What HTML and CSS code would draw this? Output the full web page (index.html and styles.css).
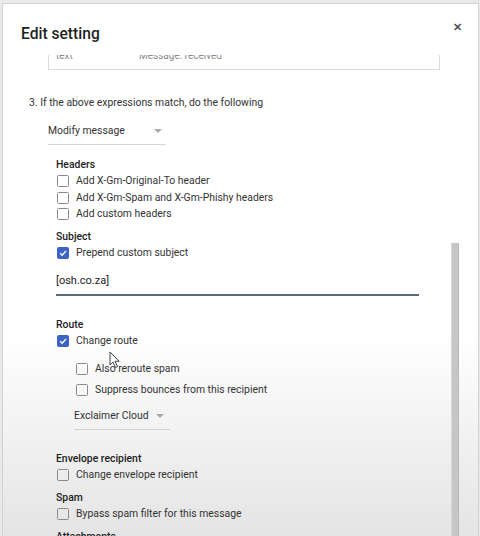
FILE: index.html
```html
<!DOCTYPE html>
<html>
<head>
<meta charset="utf-8">
<link rel="stylesheet" href="styles.css">
</head>
<body>
<div class="dialog">
  <div class="header">
    <h1 class="title">Edit setting</h1>
    <span class="close">&#x2715;</span>
  </div>
  <div class="viewport">
    <div class="content">
      <div class="table">
        <div class="table-row"><span class="col1">text</span><span class="col2">Message: received</span></div>
      </div>
      <div class="step">3. If the above expressions match, do the following</div>
      <div class="select select-main"><span>Modify message</span><span class="caret"></span></div>

      <div class="group g-headers">
        <div class="label">Headers</div>
        <div class="row"><span class="cb"></span>Add X-Gm-Original-To header</div>
        <div class="row"><span class="cb"></span>Add X-Gm-Spam and X-Gm-Phishy headers</div>
        <div class="row"><span class="cb"></span>Add custom headers</div>
      </div>

      <div class="group g-subject">
        <div class="label">Subject</div>
        <div class="row"><span class="cb checked"><svg viewBox="0 0 12 12"><path d="M2.6 6.2 L5 8.6 L9.6 3.6" /></svg></span>Prepend custom subject</div>
        <div class="input">[osh.co.za]</div>
      </div>

      <div class="group g-route">
        <div class="label">Route</div>
        <div class="row"><span class="cb checked"><svg viewBox="0 0 12 12"><path d="M2.6 6.2 L5 8.6 L9.6 3.6" /></svg></span>Change route</div>
        <div class="nested">
          <div class="row nrow first"><span class="cb"></span>Also reroute spam</div>
          <div class="row nrow"><span class="cb"></span>Suppress bounces from this recipient</div>
          <div class="select select-route"><span>Exclaimer Cloud</span><span class="caret"></span></div>
        </div>
      </div>

      <div class="group g-env">
        <div class="label">Envelope recipient</div>
        <div class="row"><span class="cb"></span>Change envelope recipient</div>
      </div>

      <div class="group g-spam">
        <div class="label">Spam</div>
        <div class="row"><span class="cb"></span>Bypass spam filter for this message</div>
      </div>

      <div class="group g-att">
        <div class="label">Attachments</div>
      </div>
    </div>
    <div class="scrollbar"></div>
    <svg class="cursor" viewBox="0 0 12 18"><path d="M1 1 L1 14 L4 11 L6.5 16.5 L8.5 15.6 L6 10.3 L10.2 10.3 Z" fill="#fff" stroke="#444" stroke-width="1"/></svg>
  </div>
</div>
</body>
</html>
```

FILE: styles.css
```css
* { box-sizing: border-box; }
html, body { margin: 0; padding: 0; }
body {
  width: 480px;
  height: 536px;
  overflow: hidden;
  background: #e9e9e9;
  font-family: Roboto, "Liberation Sans", Arial, sans-serif;
  color: #2b2b2b;
}
.dialog {
  margin: 3px 0 0 2px;
  width: 477px;
  height: 533px;
  border: 1px solid #d2d2d2;
  border-bottom: none;
  background: linear-gradient(to bottom, #ffffff 0px, #ffffff 330px, #f3f3f3 420px, #e4e4e4 533px);
  display: flex;
  flex-direction: column;
  overflow: hidden;
}
.header {
  height: 51px;
  flex: none;
  display: flex;
  justify-content: space-between;
  align-items: flex-start;
  padding: 0 16px 0 18px;
  background: #fff;
}
.title {
  margin: 21px 0 0 0;
  font-size: 15.6px;
  font-weight: 500;
  color: #1f1f1f;
  line-height: 18px;
}
.close {
  margin-top: 17px;
  font-size: 11px;
  color: #555;
  font-weight: 700;
  line-height: 14px;
}
.viewport {
  flex: 1;
  position: relative;
  overflow: hidden;
}
.content {
  margin-top: -23px;
  padding-left: 26px;
  font-size: 10.4px;
  line-height: 16px;
}
.table {
  margin-left: 19px;
  width: 392px;
  border: 1px solid #dcdcdc;
  border-top: none;
  padding: 16px 7px 5px;
  color: #888;
}
.table-row { display: flex; font-size: 10px; }
.col1 { width: 83px; }
.step {
  margin-top: 25px;
  color: #333;
}
.select {
  display: flex;
  align-items: center;
  justify-content: space-between;
  border-bottom: 1px solid #d4d4d4;
  color: #333;
  padding-bottom: 5px;
}
.select-main {
  margin: 12px 0 0 19px;
  width: 118px;
  padding-right: 4px;
}
.caret {
  width: 0;
  height: 0;
  border-left: 4px solid transparent;
  border-right: 4px solid transparent;
  border-top: 4px solid #aaa;
}
.group { margin-left: 27px; }
.g-headers { margin-top: 12px; }
.label {
  font-weight: 500;
  color: #222;
  height: 16px;
}
.row {
  display: flex;
  align-items: center;
  height: 16.5px;
  color: #333;
}
.cb {
  width: 12px;
  height: 12px;
  border: 1px solid #8a8a8a;
  border-radius: 1.5px;
  margin: 0 7px 0 1px;
  flex: none;
  display: flex;
  align-items: center;
  justify-content: center;
}
.cb.checked {
  background: #3d63c5;
  border-color: #3d63c5;
}
.cb svg { width: 12px; height: 12px; }
.cb svg path { fill: none; stroke: #fff; stroke-width: 1.6; }
.g-subject { margin-top: 6px; }
.input {
  margin-top: 12px;
  width: 363px;
  border-bottom: 2px solid #5b6b7c;
  padding-bottom: 5px;
  color: #222;
  font-size: 11px;
}
.g-route { margin-top: 21px; }
.nested { margin-left: 19px; }
.nrow { height: 21px; }
.nrow.first { margin-top: 9px; }
.select-route {
  margin: 4px 0 0 -1px;
  width: 96px;
  padding: 3px 6px 5px 0;
}
.g-env { margin-top: 21px; }
.g-spam { margin-top: 6.5px; }
.g-att { margin-top: 6.5px; }
.scrollbar {
  position: absolute;
  left: 448px;
  top: 188px;
  width: 8px;
  height: 400px;
  background: #c6c6c6;
  border-left: 1px solid #d8d8d8;
  border-right: 1px solid #b8b8b8;
}
.cursor {
  position: absolute;
  left: 106px;
  top: 296px;
  width: 12px;
  height: 18px;
}
```
